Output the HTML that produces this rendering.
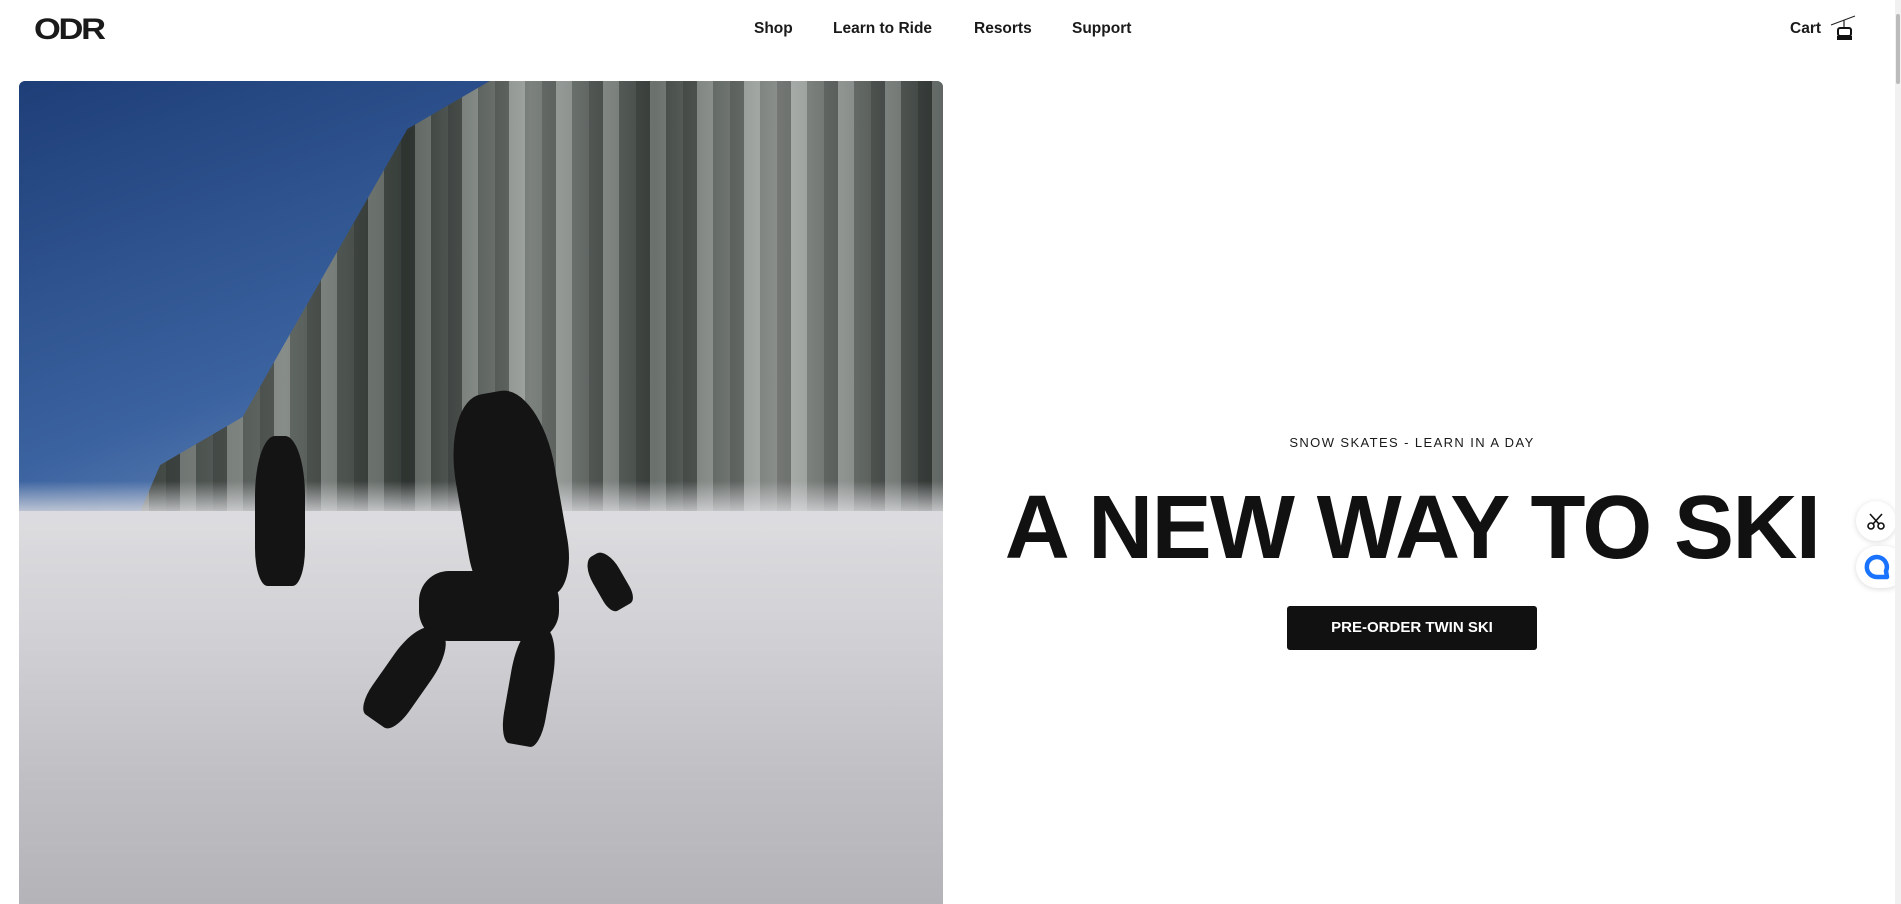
<!DOCTYPE html>
<html><head><meta charset="utf-8"><style>
html,body{margin:0;padding:0;background:#fff;width:1901px;height:904px;overflow:hidden;font-family:"Liberation Sans",sans-serif;color:#111}
.logo{position:absolute;left:34px;top:13px;font-size:30px;font-weight:900;letter-spacing:-2px;color:#1a1a1a;transform:scaleX(1.15);transform-origin:left}
.nav a{position:absolute;top:20px;font-size:15.5px;font-weight:700;color:#1a1a1a;text-decoration:none}
.img{position:absolute;left:19px;top:81px;width:924px;height:823px;border-radius:6px 6px 0 0;overflow:hidden;background:#c8c8cb}
.sky{position:absolute;left:0;top:0;width:520px;height:460px;background:linear-gradient(160deg,#1e3e78,#3b63a0 60%,#7a96c0)}
.trees{position:absolute;left:100px;top:0;width:824px;height:480px;background:
repeating-linear-gradient(90deg,rgba(0,0,0,.25) 0 14px,rgba(255,255,255,.18) 14px 30px,rgba(0,0,0,.1) 30px 47px),
linear-gradient(90deg,#3f4743,#6d746f 20%,#3c443f 35%,#8a908c 50%,#4a524d 65%,#9a9f9b 80%,#3e4541);clip-path:polygon(0 100%,5% 80%,15% 70%,25% 40%,35% 10%,45% 0,100% 0,100% 100%)}
.snow{position:absolute;left:0;top:430px;width:924px;height:393px;background:linear-gradient(180deg,#dcdcdf,#d2d2d6 30%,#bfbfc3 70%,#b3b3b8)}
.haze{position:absolute;left:0;top:400px;width:924px;height:70px;background:linear-gradient(180deg,transparent,rgba(220,220,224,.9),transparent)}
.p{position:absolute;background:#141414;border-radius:40% 40% 25% 25%}
.sub{position:absolute;left:1212px;width:400px;text-align:center;top:435px;font-size:13px;letter-spacing:1.4px;color:#1a1a1a}
h1{position:absolute;left:960px;width:904px;text-align:center;top:478px;margin:0;font-size:90px;font-weight:900;letter-spacing:-1.6px;line-height:100px;color:#111}
.btn{position:absolute;left:1287px;top:606px;width:250px;height:44px;background:#111;border-radius:3px;color:#fff;font-size:15px;font-weight:700;text-align:center;line-height:44px}
.c1{position:absolute;left:1856px;top:501px;width:40px;height:40px;border-radius:50%;background:#fff;box-shadow:0 1px 6px rgba(0,0,0,.15)}
.c2{position:absolute;left:1856px;top:546px;width:50px;height:42px;border-radius:21px;background:#fff;box-shadow:0 1px 6px rgba(0,0,0,.15)}
.sb{position:absolute;right:0;top:0;width:6px;height:904px;background:#f1f1f1}
.sb div{position:absolute;left:1px;top:14px;width:4px;height:70px;background:#bbb;border-radius:2px}
</style></head><body>
<div class="logo">ODR</div>
<div class="nav"><a style="left:754px">Shop</a><a style="left:833px">Learn to Ride</a><a style="left:974px">Resorts</a><a style="left:1072px">Support</a><a style="left:1790px">Cart</a></div>
<svg style="position:absolute;left:1827px;top:15px" width="30" height="30" viewBox="0 0 30 30"><path d="M4 10 L28 1" stroke="#222" stroke-width="1"/><path d="M17 5 V13" stroke="#222" stroke-width="1.2"/><rect x="11" y="13" width="13" height="8" rx="2" fill="none" stroke="#111" stroke-width="2"/><rect x="10" y="21" width="15" height="4" fill="#111"/></svg>
<div class="img"><div class="sky"></div><div class="trees"></div><div class="snow"></div><div class="haze"></div>
<div class="p" style="left:236px;top:355px;width:50px;height:150px"></div>
<div class="p" style="left:440px;top:310px;width:100px;height:210px;transform:rotate(-10deg)"></div>
<div class="p" style="left:400px;top:490px;width:140px;height:70px;border-radius:30px"></div>
<div class="p" style="left:365px;top:540px;width:45px;height:110px;transform:rotate(35deg)"></div>
<div class="p" style="left:490px;top:545px;width:42px;height:120px;transform:rotate(10deg)"></div>
<div class="p" style="left:575px;top:470px;width:30px;height:60px;transform:rotate(-30deg)"></div>
</div>
<div class="sub">SNOW SKATES - LEARN IN A DAY</div>
<h1>A NEW WAY TO SKI</h1>
<div class="btn">PRE-ORDER TWIN SKI</div>
<div class="c1"><svg width="40" height="40" viewBox="0 0 40 40"><circle cx="15" cy="25" r="3" fill="none" stroke="#111" stroke-width="1.6"/><circle cx="25" cy="25" r="3" fill="none" stroke="#111" stroke-width="1.6"/><path d="M17 23 L26 13 M23 23 L14 13" stroke="#111" stroke-width="1.6"/></svg></div>
<div class="c2"><svg width="42" height="42" viewBox="0 0 42 42"><path d="M21 31 a10 10 0 1 1 9 -6 l1 6 z" fill="none" stroke="#1a73ff" stroke-width="4.5" stroke-linejoin="round"/></svg></div>
<div class="sb"><div></div></div>
</body></html>
